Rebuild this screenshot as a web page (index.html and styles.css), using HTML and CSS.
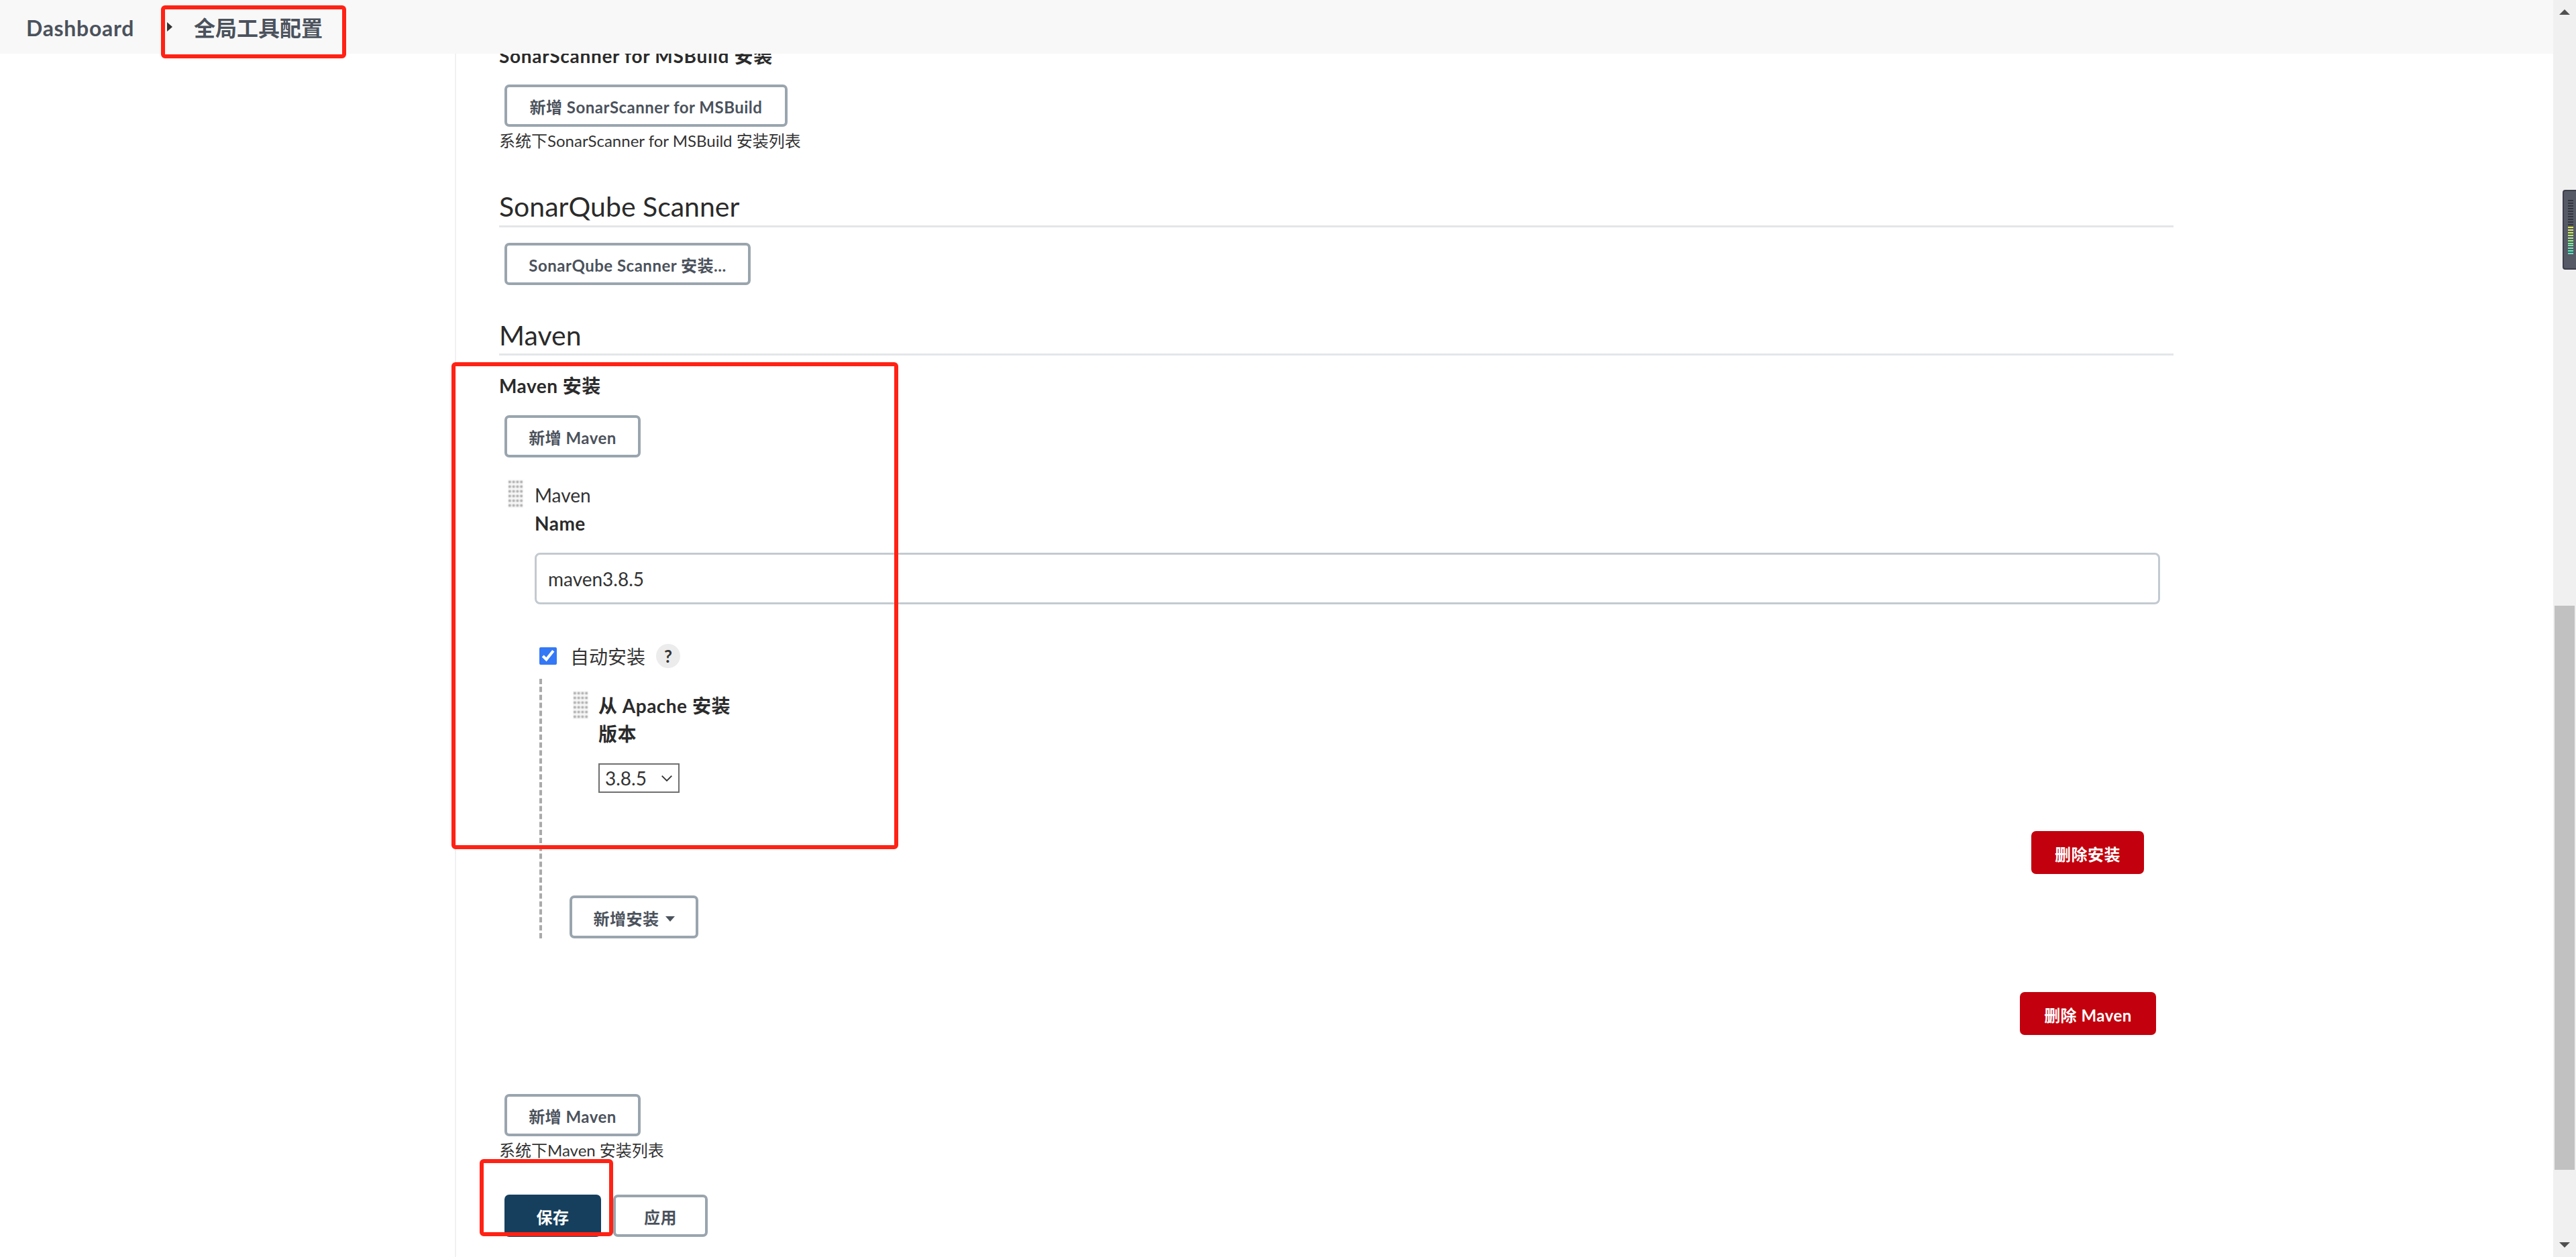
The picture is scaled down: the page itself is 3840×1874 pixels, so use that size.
FILE: index.html
```html
<!DOCTYPE html>
<html lang="zh-CN">
<head>
<meta charset="utf-8">
<title>全局工具配置</title>
<link rel="stylesheet" href="styles.css">
</head>
<body>
<div class="app">
  <div class="window">
    <header class="breadcrumbs">
      <a class="crumb crumb-home">Dashboard</a>
      <span class="crumb-arrow"></span>
      <a class="crumb crumb-current">全局工具配置</a>
    </header>
    <div class="body">
      <aside class="sidebar"></aside>
      <main class="main">
        <div class="label clipped-title">SonarScanner for MSBuild 安装</div>
        <button class="btn btn-first">新增 SonarScanner for MSBuild</button>
        <div class="help">系统下SonarScanner for MSBuild 安装列表</div>

        <h2 class="section section-sonar">SonarQube Scanner</h2>
        <button class="btn btn-after-section">SonarQube Scanner 安装...</button>

        <h2 class="section section-maven">Maven</h2>
        <div class="label label-maven">Maven 安装</div>
        <button class="btn btn-add-top">新增 Maven</button>

        <div class="tool">
          <div class="handle"></div>
          <div class="tool-body">
            <div class="tool-name">Maven</div>
            <div class="label">Name</div>
            <input class="text-input" type="text" value="maven3.8.5">
            <label class="auto-row">
              <input class="check" type="checkbox" checked>
              <span class="auto-text">自动安装</span>
              <span class="help-q">?</span>
            </label>
            <div class="dashed">
              <div class="installer">
                <div class="handle handle-installer"></div>
                <div>
                  <div class="label">从 Apache 安装</div>
                  <div class="label">版本</div>
                  <div class="select-wrap">
                    <select class="select"><option>3.8.5</option></select>
                    <svg class="chevron" viewBox="0 0 16 9" width="16" height="9"><path d="M.7.7 8 8 15.3.7" fill="none" stroke="#333" stroke-width="1.8"/></svg>
                  </div>
                </div>
              </div>
              <div class="row-end"><button class="btn btn-danger btn-del-install">删除安装</button></div>
              <button class="btn btn-add-install">新增安装<span class="caret"></span></button>
            </div>
            <div class="row-end row-del-maven"><button class="btn btn-danger btn-del-maven">删除 Maven</button></div>
          </div>
        </div>

        <button class="btn btn-add-bottom">新增 Maven</button>
        <div class="help help-tight">系统下Maven 安装列表</div>
        <div class="actions">
          <button class="btn btn-primary">保存</button>
          <button class="btn btn-apply">应用</button>
        </div>
      </main>
    </div>
  </div>
  <div class="scrollbar">
    <span class="sb-arrow sb-up"></span>
    <div class="sb-track"><div class="sb-thumb"></div></div>
    <span class="sb-arrow sb-down"></span>
  </div>
</div>

<div class="ext-widget">
  <i class="d"></i><i class="d"></i><i class="d"></i><i class="d"></i><i class="d"></i><i class="d"></i><i class="d"></i><i class="d"></i><i class="d"></i><i class="d"></i>
  <i class="c1"></i><i class="c2"></i><i class="c3"></i><i class="c4"></i><i class="c5"></i><i class="c6"></i><i class="c7"></i><i class="c8"></i><i class="c9"></i><i class="c10"></i><i class="c11"></i>
</div>

<div class="mark mark-crumb"></div>
<div class="mark mark-maven"></div>
<div class="mark mark-save"></div>
</body>
</html>
```
FILE: styles.css
```css
* { box-sizing: border-box; }
html, body { margin: 0; height: 100%; overflow: hidden; }
body {
  font-family: "Lato", "Noto Sans CJK SC", sans-serif;
  font-size: 28px;
  color: #333;
  background: #fff;
}
.app { display: flex; height: 1874px; }
.window { flex: 1; min-width: 0; display: flex; flex-direction: column; }

.breadcrumbs {
  flex: none; height: 80px; background: #f8f8f8;
  display: flex; align-items: center; padding-left: 39px;
}
.crumb { font-weight: 700; color: #4b525c; font-size: 32px; line-height: 44px; padding-top: 3px; }
.crumb-home { letter-spacing: .7px; }
.crumb-arrow {
  margin-left: 49px; margin-right: 32px; width: 0; height: 0;
  border-left: 8px solid #333;
  border-top: 7px solid transparent; border-bottom: 7px solid transparent;
}

.body { flex: 1; min-height: 0; display: flex; }
.sidebar { flex: none; width: 680px; border-right: 2px solid #f1f1f1; }
.main { flex: 1; min-width: 0; overflow: hidden; padding: 0 566px 0 64px; }

.label { font-weight: 700; line-height: 42px; color: #2b2b2b; letter-spacing: .5px; }
.clipped-title { margin-top: -18px; letter-spacing: .7px; }
.help { font-size: 24px; line-height: 36px; margin-top: 3px; color: #333; }
.help-tight { margin-top: 3px; }

.section {
  margin: 0; font-weight: 400; font-size: 41px; line-height: 56px; color: #2b2b2b;
  border-bottom: 3px solid #e4e6e8; height: 58px;
}
.section-sonar { margin-top: 52px; height: 59px; }
.section-maven { margin-top: 47px; }
.label-maven { margin-top: 24px; }

.btn {
  display: inline-block; height: 63px; padding: 2px 0 0; margin: 0;
  font: 700 24px "Lato", "Noto Sans CJK SC", sans-serif; color: #4b525c; letter-spacing: .5px;
  background: #fff; border: 4px solid #9aa5ae; border-radius: 7px;
  white-space: nowrap;
}
.btn-first { display: block; margin: 22px 0 0 8px; width: 422px; }
.btn-after-section { display: block; margin: 23px 0 0 8px; width: 367px; }
.btn-add-top { display: block; margin: 23px 0 0 8px; width: 203px; }
.btn-add-bottom { display: block; margin: 88px 0 0 8px; width: 203px; }

.tool { display: flex; gap: 17px; margin: 33px 20px 0 13px; }
.handle {
  flex: none; width: 23px; height: 42px;
  background-image: radial-gradient(circle, #b2b2b2 1.1px, #dcdcdc 2px, #f6f6f6 3.2px);
  background-size: 5.75px 7px;
}
.handle-installer { margin-top: -1px; }
.tool-body { flex: 1; min-width: 0; }
.tool-name { font-weight: 400; line-height: 42px; margin-top: 2px; color: #333; }

.text-input {
  display: block; width: 100%; height: 77px; margin-top: 23px;
  padding: 0 17px; font: 400 28px "Lato", "Noto Sans CJK SC", sans-serif; color: #333;
  border: 3px solid #c3cad1; border-radius: 8px; background: #fff;
}
.auto-row { display: flex; align-items: center; height: 42px; margin: 56px 0 0 7px; }
.check { width: 26px; height: 26px; margin: 0; accent-color: #3478f6; }
.auto-text { margin-left: 20px; }
.help-q {
  width: 36px; height: 36px; margin-left: 16px; border-radius: 50%;
  background: #ececec; display: flex; align-items: center; justify-content: center;
  font-size: 26px; font-weight: 700; color: #333;
}

.dashed { margin: 13px 0 0 7px; border-left: 4px dashed #aaa; padding-top: 19px; padding-right: 24px; }
.installer { display: flex; gap: 15px; margin-left: 46px; }
.select-wrap { position: relative; margin-top: 23px; width: 121px; height: 44px; }
.select {
  appearance: none; -webkit-appearance: none; display: block; width: 100%; height: 100%;
  padding: 0 0 0 8px; font: 400 28px "Lato", "Noto Sans CJK SC", sans-serif; color: #333;
  background: #fff; border: 2.5px solid #6f6f6f; border-radius: 0;
}
.chevron { position: absolute; right: 11px; top: 18px; }
.row-end { display: flex; justify-content: flex-end; }
.btn-danger { background: #c3000d; border: none; color: #fff; height: 64px; border-radius: 7px; }
.btn-del-install { margin-top: 57px; width: 168px; }
.btn-del-maven { width: 203px; }
.btn-add-install { display: block; margin: 32px 0 0 41px; width: 192px; height: 64px; }
.caret {
  display: inline-block; vertical-align: middle; margin-left: 9px; margin-top: -4px;
  border-top: 8px solid #4b525c; border-left: 7px solid transparent; border-right: 7px solid transparent;
}
.row-del-maven { margin: 80px 6px 0 0; }

.actions { display: flex; gap: 18px; margin: 48px 0 0 8px; }
.btn-primary { width: 144px; background: #163f5e; border-color: #163f5e; color: #fff; }
.btn-apply { width: 141px; }

.scrollbar { flex: none; width: 34px; background: #f0f0f0; display: flex; flex-direction: column; align-items: center; }
.sb-track { flex: 1; width: 100%; padding: 0 2px; min-height: 0; }
.sb-thumb { height: 841px; margin-top: 881px; background: #c1c1c1; }
.sb-arrow { flex: none; width: 0; height: 0; border-left: 8px solid transparent; border-right: 8px solid transparent; }
.sb-up { margin-top: 14px; border-bottom: 8px solid #505050; }
.sb-down { margin-bottom: 14px; border-top: 8px solid #505050; }

.ext-widget {
  position: absolute; left: 3820px; top: 283px; width: 20px; height: 119px;
  background: #565a66; border: 2px solid #3c3f4a; border-right: none; border-radius: 4px 0 0 4px;
  display: flex; flex-direction: column; gap: 1.97px; padding: 13px 4px 0 6px;
}
.ext-widget i { display: block; height: 2px; background: #34363f; }
.ext-widget .c1 { background: #dfe650; }
.ext-widget .c2 { background: #d8e758; }
.ext-widget .c3 { background: #c9e968; }
.ext-widget .c4 { background: #bcea74; }
.ext-widget .c5 { background: #a9ea80; }
.ext-widget .c6 { background: #96ea8c; }
.ext-widget .c7 { background: #85ea98; }
.ext-widget .c8 { background: #75e9a4; }
.ext-widget .c9 { background: #68e8b0; }
.ext-widget .c10 { background: #5ee7ba; }
.ext-widget .c11 { background: #55e6c4; }

.mark { position: absolute; border: 6px solid #ff2214; border-radius: 6px; pointer-events: none; }
.mark-crumb { left: 240px; top: 8px; width: 276px; height: 79px; }
.mark-maven { left: 673px; top: 540px; width: 666px; height: 726px; }
.mark-save { left: 715px; top: 1728px; width: 199px; height: 115px; }
```
